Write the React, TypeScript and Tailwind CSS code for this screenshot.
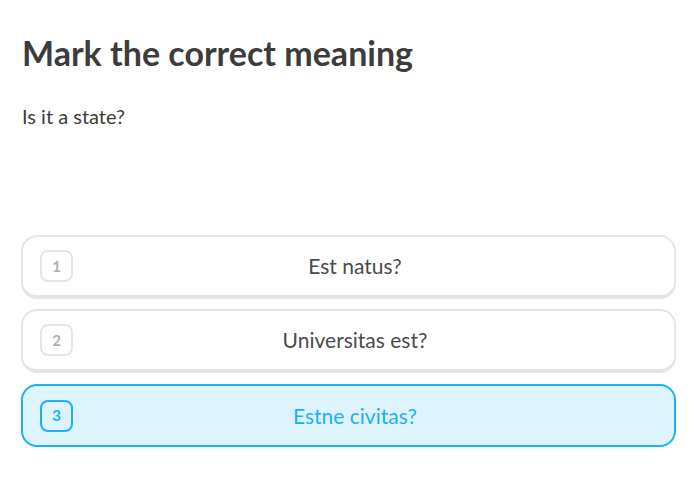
import React from "react";

const options = [
  { n: 1, text: "Est natus?", selected: false },
  { n: 2, text: "Universitas est?", selected: false },
  { n: 3, text: "Estne civitas?", selected: true },
];

export default function App() {
  return (
    <div
      className="w-[697px] h-[496px] bg-white px-[21px] pt-[32px]"
      style={{ fontFamily: "'Lato', 'Liberation Sans', sans-serif" }}
    >
      <h1 className="text-[34px] font-bold leading-[42px] text-[#3c3c3c] ml-[1px]">
        Mark the correct meaning
      </h1>
      <p className="mt-[30px] text-[20px] leading-[24px] text-[#3c3c3c] ml-[1px]">
        Is it a state?
      </p>
      <div className="mt-[107px] flex flex-col gap-[10px]">
        {options.map((o) =>
          o.selected ? (
            <div
              key={o.n}
              className="relative mt-[1px] flex h-[63px] items-center rounded-[16px] border-2 border-[#1cb0f6] bg-[#ddf4ff] px-[17px]"
            >
              <div className="flex h-[32px] w-[33px] items-center justify-center rounded-[8px] border-2 border-[#1cb0f6] text-[15px] font-bold text-[#1cb0f6]">
                {o.n}
              </div>
              <div className="absolute inset-0 flex items-center justify-center pl-[13px] text-[21px] text-[#1cb0f6]">
                {o.text}
              </div>
            </div>
          ) : (
            <div
              key={o.n}
              className="relative flex h-[64px] items-center rounded-[16px] border-2 border-b-[4px] border-[#e5e5e5] bg-white px-[17px]"
            >
              <div className="flex h-[32px] w-[33px] items-center justify-center rounded-[8px] border-2 border-[#e5e5e5] text-[15px] font-bold text-[#afafaf]">
                {o.n}
              </div>
              <div className="absolute inset-0 flex items-center justify-center pl-[13px] text-[21px] text-[#4b4b4b]">
                {o.text}
              </div>
            </div>
          )
        )}
      </div>
    </div>
  );
}
